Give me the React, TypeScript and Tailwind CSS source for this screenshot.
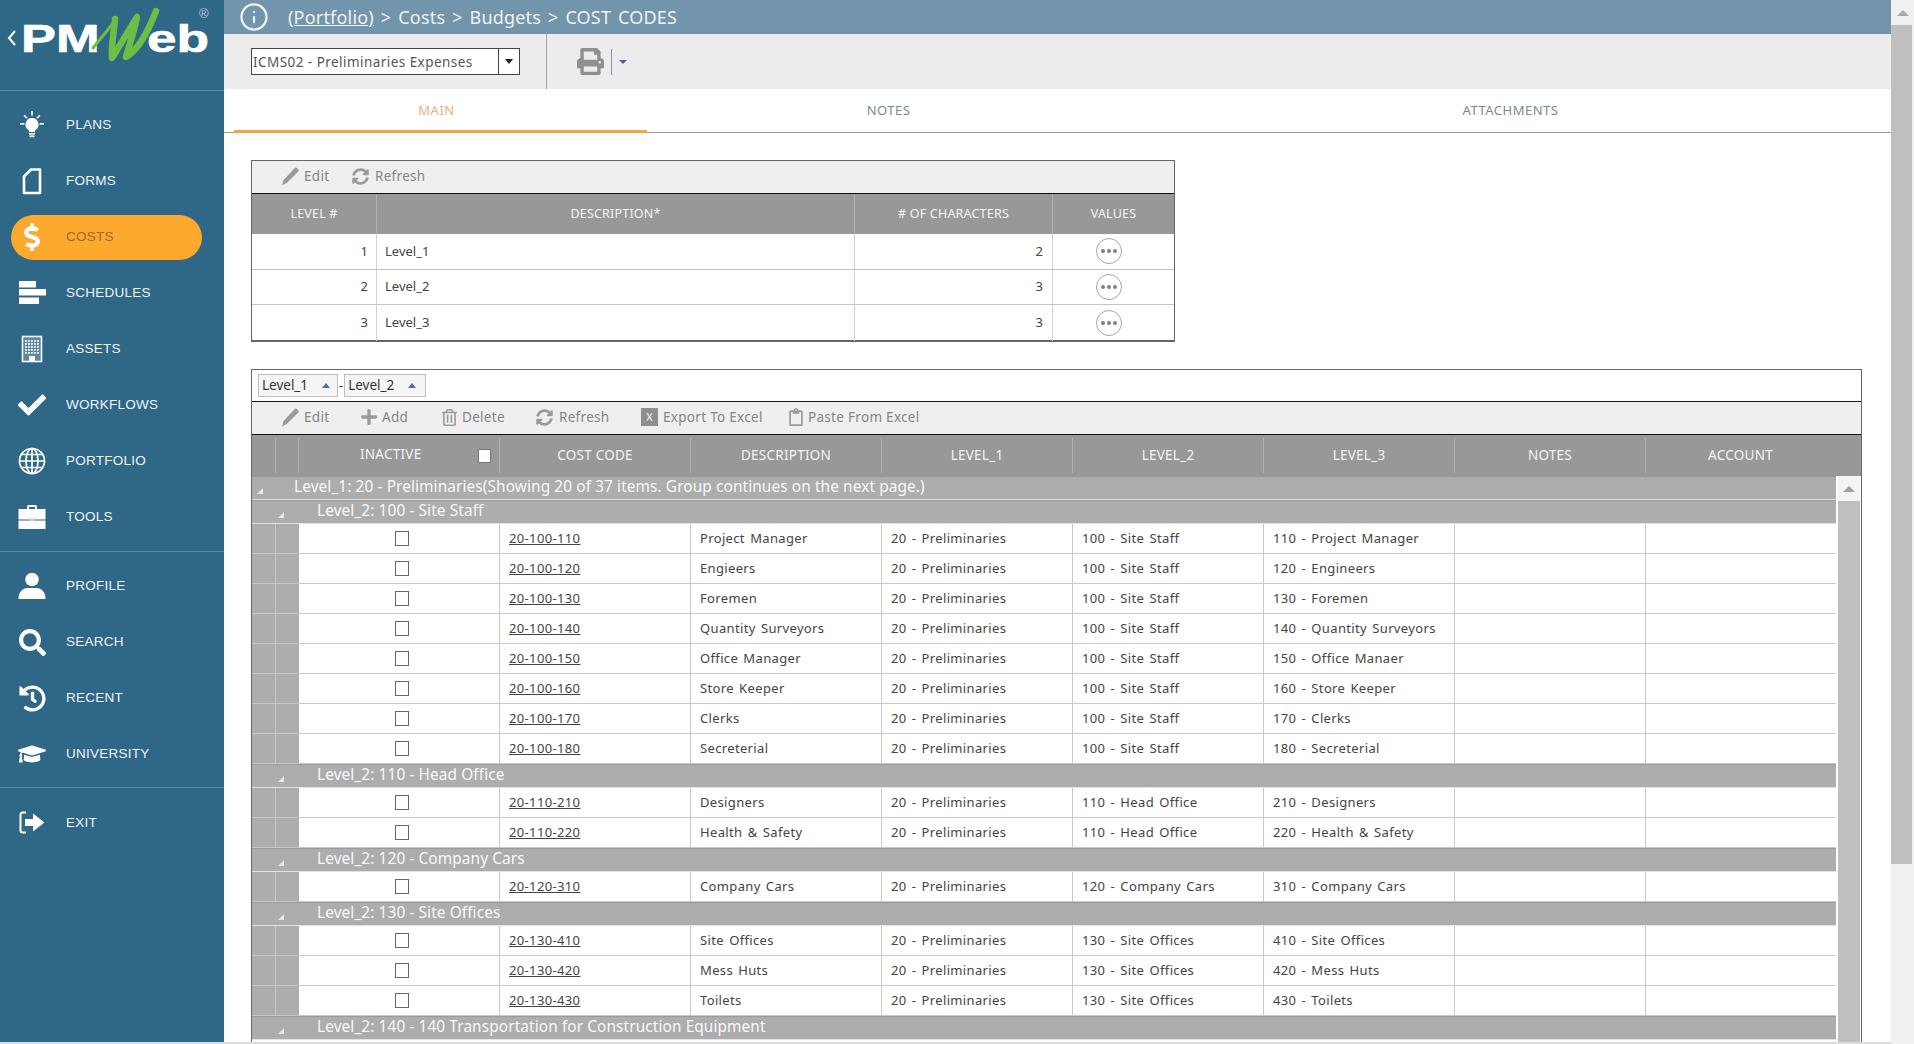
import { ReactNode } from "react";
import { Info } from "lucide-react";
import {
  FaCheck,
  FaDollarSign,
  FaGraduationCap,
  FaHistory,
  FaPlus,
  FaPrint,
  FaRegClipboard,
  FaRegTrashAlt,
  FaSearch,
  FaSyncAlt,
} from "react-icons/fa";

const BODY_FONT = "font-['Noto_Sans',sans-serif]";

function BulbIcon() {
  return (
    <svg width="28" height="28" viewBox="0 0 28 28" fill="white">
      <path d="M14 7a6.5 6.5 0 0 0-4 11.6c.8.7 1 1.4 1 2.4h6c0-1 .2-1.7 1-2.4A6.5 6.5 0 0 0 14 7z" />
      <rect x="11" y="22" width="6" height="1.6" />
      <rect x="11.5" y="24.4" width="5" height="1.8" />
      <rect x="13.2" y="0" width="1.6" height="4.5" />
      <rect x="2" y="12" width="4.5" height="1.6" />
      <rect x="21.5" y="12" width="4.5" height="1.6" />
      <path d="M5.5 4.8l1.2-1.1 3 3-1.2 1.1zM22.5 4.8l-1.2-1.1-3 3 1.2 1.1z" />
    </svg>
  );
}

function PageIcon() {
  return (
    <svg width="28" height="28" viewBox="0 0 28 28" fill="none" stroke="white" strokeWidth="2.6">
      <path d="M6 26V9.5L13 2.5h9V26z" strokeLinejoin="round" />
    </svg>
  );
}

function BarsIcon() {
  return (
    <svg width="28" height="28" viewBox="0 0 28 28" fill="white">
      <rect x="1" y="2" width="17" height="6.5" />
      <rect x="1" y="10" width="27" height="6.5" />
      <rect x="1" y="18.5" width="20" height="6.5" />
    </svg>
  );
}

function BuildingIcon() {
  const dots = [];
  for (let y = 5; y < 20; y += 3) {
    for (let x = 7; x < 22; x += 3) {
      dots.push(<rect key={x + "-" + y} x={x} y={y} width="1.8" height="1.8" fill="white" />);
    }
  }
  return (
    <svg width="28" height="28" viewBox="0 0 28 28">
      <rect x="4.5" y="1.5" width="19" height="25" fill="#5b87a2" stroke="white" strokeWidth="1.6" />
      {dots}
      <rect x="11" y="21" width="6" height="5.5" fill="white" />
    </svg>
  );
}

function GlobeIcon() {
  return (
    <svg width="28" height="28" viewBox="0 0 28 28" fill="none" stroke="white" strokeWidth="1.7">
      <circle cx="14" cy="14" r="12.5" />
      <ellipse cx="14" cy="14" rx="6" ry="12.5" />
      <path d="M14 1.5v25M1.5 14h25M3.5 7.5h21M3.5 20.5h21" />
    </svg>
  );
}

function BriefcaseIcon() {
  return (
    <svg width="28" height="28" viewBox="0 0 28 28" fill="white">
      <path d="M9 6V3.5A1.5 1.5 0 0 1 10.5 2h7A1.5 1.5 0 0 1 19 3.5V6h-2V4h-6v2z" />
      <rect x="0.5" y="6" width="27" height="10.5" />
      <rect x="0.5" y="17.5" width="27" height="8.5" />
      <rect x="12.5" y="15" width="3" height="3.5" fill="#cfdde6" />
    </svg>
  );
}

function UserIcon() {
  return (
    <svg width="28" height="28" viewBox="0 0 28 28" fill="white">
      <circle cx="14" cy="7.5" r="6.8" />
      <path d="M0.5 27c0-7 4-11 9-11h9c5 0 9 4 9 11z" />
    </svg>
  );
}

function ExitIcon() {
  return (
    <svg width="28" height="28" viewBox="0 0 28 28" fill="white">
      <path d="M8 3.5H4.5A2 2 0 0 0 2.5 5.5v16a2 2 0 0 0 2 2H8" fill="none" stroke="white" strokeWidth="2" />
      <path d="M7 10h8V4.5L26.5 13.5 15 22.5V17H7z" />
    </svg>
  );
}

function PencilIcon() {
  return (
    <svg width="19" height="19" viewBox="0 0 19 19" fill="currentColor">
      <path d="M1 18.5l1.6-5.5L13.5 1.2c.8-.8 1.8-.8 2.6 0l1 1c.8.8.8 1.8 0 2.6L6 15.8z" />
    </svg>
  );
}

function Logo() {
  return (
    <div className="relative h-[91px] border-b border-[#5f8ba6] font-['Liberation_Sans',sans-serif] text-white">
      <svg className="absolute left-[7px] top-[29px]" width="10" height="18" viewBox="0 0 10 18" fill="none" stroke="white" strokeWidth="2">
        <path d="M8 2L2 9l6 7" />
      </svg>
      <span className="absolute left-[21px] top-[17px] origin-left scale-x-[1.38] text-[38px] font-bold leading-[44px] [-webkit-text-stroke:0.6px_white]">PM</span>
      <span className="absolute left-[147px] top-[17px] origin-left scale-x-[1.4] text-[38px] font-bold leading-[44px] [-webkit-text-stroke:0.6px_white]">eb</span>
      <svg className="absolute left-[88px] top-[6px]" width="74" height="58" viewBox="0 0 74 58" fill="none" stroke="#6cbf44" strokeLinejoin="round" strokeLinecap="round">
        <path d="M5 42L27 15" strokeWidth="3" />
        <path d="M27 13C26 26 23 40 24 52C32 40 40 25 49 11C46 26 41 40 38 51C50 44 60 26 68 5" strokeWidth="6.5" />
      </svg>
      <span className="absolute left-[199px] top-[6px] text-[13px] leading-4 text-[#b9cbd7]">®</span>
    </div>
  );
}

function NavItem({ icon, label, active }: { icon: ReactNode; label: string; active?: boolean }) {
  return (
    <div className="flex h-[56px] items-center">
      <div
        className={
          "mx-[11px] flex h-[45px] w-[191px] items-center gap-[20px] rounded-full pl-[7px] " +
          (active ? "bg-[#fda92d] text-[#9a6a30]" : "text-[#eef3f6]")
        }
      >
        <span className="flex w-[28px] shrink-0 justify-center text-white">{icon}</span>
        <span className="font-['Liberation_Sans',sans-serif] text-[13.5px] tracking-[0.25px]">{label}</span>
      </div>
    </div>
  );
}

function Sidebar() {
  return (
    <aside className="w-[224px] shrink-0 bg-[#2f6787]">
      <Logo />
      <div className="border-b border-[#5f8ba6] py-[6px]">
        <NavItem icon={<BulbIcon />} label="PLANS" />
        <NavItem icon={<PageIcon />} label="FORMS" />
        <NavItem icon={<FaDollarSign size={28} />} label="COSTS" active />
        <NavItem icon={<BarsIcon />} label="SCHEDULES" />
        <NavItem icon={<BuildingIcon />} label="ASSETS" />
        <NavItem icon={<FaCheck size={28} />} label="WORKFLOWS" />
        <NavItem icon={<GlobeIcon />} label="PORTFOLIO" />
        <NavItem icon={<BriefcaseIcon />} label="TOOLS" />
      </div>
      <div className="border-b border-[#5f8ba6] pb-[5px] pt-[6px]">
        <NavItem icon={<UserIcon />} label="PROFILE" />
        <NavItem icon={<FaSearch size={27} />} label="SEARCH" />
        <NavItem icon={<FaHistory size={27} />} label="RECENT" />
        <NavItem icon={<FaGraduationCap size={28} />} label="UNIVERSITY" />
      </div>
      <div className="pt-[7px]">
        <NavItem icon={<ExitIcon />} label="EXIT" />
      </div>
    </aside>
  );
}

function TopBars() {
  return (
    <>
      <div className="flex h-[34px] shrink-0 items-center bg-[#7395ab] pl-[15px] text-[#edf2f5]">
        <Info size={30} strokeWidth={1.8} />
        <div className={BODY_FONT + " ml-[19px] text-[18px] tracking-[0.2px] [word-spacing:2px]"}>
          <span className="underline">(Portfolio)</span> &gt; Costs &gt; Budgets &gt; COST CODES
        </div>
      </div>
      <div className="flex h-[55px] shrink-0 items-stretch bg-[#ececec]">
        <div className="flex w-[323px] items-center border-r border-[#a5a5a5] pl-[27px]">
          <div className="flex h-[27px] w-[269px] items-center border border-[#444] bg-white">
            <span className={BODY_FONT + " flex-1 pl-[1px] pt-[2px] text-[13.5px] tracking-[0.45px] text-[#555]"}>ICMS02 - Preliminaries Expenses</span>
            <span className="flex h-full w-[21px] items-center justify-center border-l border-[#444]">
              <span className="h-0 w-0 border-x-[4px] border-t-[5px] border-x-transparent border-t-[#222]" />
            </span>
          </div>
        </div>
        <div className="flex items-center pl-[30px]">
          <FaPrint size={27} className="text-[#8f8f8f]" />
          <span className="ml-[7px] h-[26px] w-[1px] bg-[#8d92b4]" />
          <span className="ml-[7px] h-0 w-0 border-x-[4px] border-t-[4px] border-x-transparent border-t-[#4d5f9f]" />
        </div>
      </div>
      <div className={BODY_FONT + " flex h-[44px] shrink-0 border-b border-[#999] pl-[10px] text-[13px] tracking-[0.5px] text-[#7d8893]"}>
        <div className="-mb-px flex w-[413px] items-center justify-center border-b-[3px] border-[#eea93f] pr-[8px] pt-[2px] text-[#f2ad7c]">MAIN</div>
        <div className="flex w-[483px] items-center justify-center">NOTES</div>
        <div className="flex flex-1 items-center justify-center">ATTACHMENTS</div>
      </div>
    </>
  );
}

function ToolItem({ icon, label, className, iconClass }: { icon: ReactNode; label: string; className: string; iconClass?: string }) {
  return (
    <div className={"flex shrink-0 items-center pb-[2px] " + className}>
      <span className={"flex shrink-0 items-center text-[#9a9a9a] " + (iconClass ?? "w-[23px]")}>{icon}</span>
      <span className="text-[13.5px] tracking-[0.3px] text-[#868686]">{label}</span>
    </div>
  );
}

function DotsButton() {
  return (
    <span className="flex h-[26px] w-[26px] items-center justify-center gap-[2px] rounded-full border border-[#a5a5a5] bg-white">
      <span className="h-[4px] w-[4px] rounded-full bg-[#808080]" />
      <span className="h-[4px] w-[4px] rounded-full bg-[#808080]" />
      <span className="h-[4px] w-[4px] rounded-full bg-[#808080]" />
    </span>
  );
}

const levelRows = [
  ["1", "Level_1", "2"],
  ["2", "Level_2", "3"],
  ["3", "Level_3", "3"],
];

const LEVEL_COLS = "grid grid-cols-[125px_478px_198px_121px]";

function LevelsGrid() {
  return (
    <div className="h-[182px] w-[924px] border border-[#666] border-b-2">
      <div className="flex h-[33px] items-center border-b border-[#111] bg-[#efefef] pl-[29px]">
        <ToolItem className="w-[71px]" icon={<PencilIcon />} label="Edit" />
        <ToolItem className="" icon={<FaSyncAlt size={17} />} label="Refresh" />
      </div>
      <div className={LEVEL_COLS + " h-[40px] bg-[#989898] text-[12.5px] tracking-[0.2px] text-[#f5f5f5]"}>
        <div className="flex items-center justify-center border-r border-[#b0b0b0]">LEVEL #</div>
        <div className="flex items-center justify-center border-r border-[#b0b0b0]">DESCRIPTION*</div>
        <div className="flex items-center justify-center border-r border-[#b0b0b0]">
          # OF CHARACTERS
        </div>
        <div className="flex items-center justify-center">VALUES</div>
      </div>
      {levelRows.map((r, i) => (
        <div key={r[0]} className={LEVEL_COLS + " h-[35.5px] text-[13px] text-[#444] " + (i < 2 ? "border-b border-[#c4c4c4]" : "")}>
          <div className="flex items-center justify-end border-r border-[#d0d0d0] pr-[8px]">{r[0]}</div>
          <div className="flex items-center border-r border-[#d0d0d0] pl-[8px]">{r[1]}</div>
          <div className="flex items-center justify-end border-r border-[#d0d0d0] pr-[9px]">{r[2]}</div>
          <div className="flex items-center justify-center pr-[9px]">
            <DotsButton />
          </div>
        </div>
      ))}
    </div>
  );
}

const COLS = "grid grid-cols-[24px_23px_201px_191px_191px_191px_191px_191px_191px_189px]";

function HeadCell({ children }: { children?: ReactNode }) {
  return <div className="my-[3px] flex items-center justify-center border-r border-[#aeaeae]">{children}</div>;
}

function GroupRow({ label, indent }: { label: string; indent?: boolean }) {
  return (
    <div className="flex h-[24px] items-center border-b border-t border-b-[#e3e3e3] border-t-[#9a9a9a] bg-[#adadad] pb-[3px] text-[15.4px] tracking-[0.1px] text-[#f9f9f9]">
      <span className={(indent ? "ml-[26px] mr-[33px] " : "ml-[5px] mr-[31px] ") + "mt-[9px] h-0 w-0 border-b-[6px] border-l-[6px] border-b-[#e8e8e8] border-l-transparent"} />
      <span>{label}</span>
    </div>
  );
}

function DataRow({ row }: { row: string[] }) {
  return (
    <div className={COLS + " h-[30px] border-b border-[#c9c9c9] text-[13px] tracking-[0.35px] text-[#444] [word-spacing:1.5px]"}>
      <div className="border-r border-[#c6c6c6] bg-[#adadad]" />
      <div className="bg-[#adadad]" />
      <div className="flex items-center justify-center border-r border-[#c9c9c9] pl-[5px]">
        <span className="h-[15px] w-[14px] border border-[#666] bg-white" />
      </div>
      <div className="flex items-center border-r border-[#c9c9c9] pl-[9px] pt-[1px] underline">{row[0]}</div>
      {row.slice(1).map((c, i) => (
        <div key={i} className="flex items-center border-r border-[#c9c9c9] pl-[9px] pt-[1px]">
          {c}
        </div>
      ))}
      <div className="border-r border-[#c9c9c9]" />
      <div />
    </div>
  );
}

function row(code: string, desc: string, l2: string, l3: string) {
  return [code, desc, "20 - Preliminaries", l2, l3];
}

const staff = "100 - Site Staff";
const office = "110 - Head Office";
const cars = "120 - Company Cars";
const site = "130 - Site Offices";

const groups: [string, string[][]][] = [
  [
    "Level_2: 100 - Site Staff",
    [
      row("20-100-110", "Project Manager", staff, "110 - Project Manager"),
      row("20-100-120", "Engieers", staff, "120 - Engineers"),
      row("20-100-130", "Foremen", staff, "130 - Foremen"),
      row("20-100-140", "Quantity Surveyors", staff, "140 - Quantity Surveyors"),
      row("20-100-150", "Office Manager", staff, "150 - Office Manaer"),
      row("20-100-160", "Store Keeper", staff, "160 - Store Keeper"),
      row("20-100-170", "Clerks", staff, "170 - Clerks"),
      row("20-100-180", "Secreterial", staff, "180 - Secreterial"),
    ],
  ],
  [
    "Level_2: 110 - Head Office",
    [
      row("20-110-210", "Designers", office, "210 - Designers"),
      row("20-110-220", "Health & Safety", office, "220 - Health & Safety"),
    ],
  ],
  ["Level_2: 120 - Company Cars", [row("20-120-310", "Company Cars", cars, "310 - Company Cars")]],
  [
    "Level_2: 130 - Site Offices",
    [
      row("20-130-410", "Site Offices", site, "410 - Site Offices"),
      row("20-130-420", "Mess Huts", site, "420 - Mess Huts"),
      row("20-130-430", "Toilets", site, "430 - Toilets"),
    ],
  ],
  ["Level_2: 140 - 140 Transportation for Construction Equipment", []],
];

function SortChip({ label, className }: { label: string; className: string }) {
  return (
    <div className={"flex h-[23px] items-center border border-[#bdbdbd] bg-[#f5f5f5] pl-[3px] text-[13.5px] text-[#333] " + className}>
      <span className="w-[60px]">{label}</span>
      <span className="h-0 w-0 border-x-[4px] border-b-[5px] border-x-transparent border-b-[#4f6f9f]" />
    </div>
  );
}

function CodesGrid() {
  return (
    <div className="mt-[27px] min-h-0 w-[1611px] flex-1 overflow-hidden border-l border-r border-t border-[#666]">
      <div className="flex h-[32px] items-center gap-[1px] border-b border-[#111] pl-[6px]">
        <SortChip className="w-[80px]" label="Level_1" />
        <span className="text-[13px] text-[#333]">-</span>
        <SortChip className="w-[82px]" label="Level_2" />
      </div>
      <div className="flex h-[33px] items-center border-b border-[#111] bg-[#efefef] pl-[29px]">
        <ToolItem className="w-[79px]" icon={<PencilIcon />} label="Edit" />
        <ToolItem className="w-[81px]" iconClass="w-[22px]" icon={<FaPlus size={18} />} label="Add" />
        <ToolItem className="w-[95px]" iconClass="w-[21px]" icon={<FaRegTrashAlt size={17} />} label="Delete" />
        <ToolItem className="w-[105px]" icon={<FaSyncAlt size={17} />} label="Refresh" />
        <ToolItem
          className="w-[146px]"
          iconClass="w-[22px]"
          icon={<span className="flex h-[18px] w-[17px] items-center justify-center bg-[#8e8e8e] text-[11px] text-white">X</span>}
          label="Export To Excel"
        />
        <ToolItem className="" iconClass="w-[21px]" icon={<FaRegClipboard size={18} />} label="Paste From Excel" />
      </div>
      <div className={COLS + " h-[41px] bg-[#989898] text-[13.5px] tracking-[0.25px] text-[#f4f4f4]"}>
        <HeadCell />
        <HeadCell />
        <div className="my-[3px] flex items-center border-r border-[#aeaeae]">
          <span className="ml-[61px] -mt-[3px]">INACTIVE</span>
          <span className="ml-[57px] h-[14px] w-[13px] border border-[#777] bg-white" />
        </div>
        <HeadCell>COST CODE</HeadCell>
        <HeadCell>DESCRIPTION</HeadCell>
        <HeadCell>LEVEL_1</HeadCell>
        <HeadCell>LEVEL_2</HeadCell>
        <HeadCell>LEVEL_3</HeadCell>
        <HeadCell>NOTES</HeadCell>
        <div className="my-[3px] flex items-center justify-center">ACCOUNT</div>
      </div>
      <div className="flex h-full">
        <div className="w-[1584px] shrink-0">
          <GroupRow label="Level_1: 20 - Preliminaries(Showing 20 of 37 items. Group continues on the next page.)" />
          {groups.map(([label, rows]) => (
            <div key={label}>
              <GroupRow label={label} indent />
              {rows.map((r) => (
                <DataRow key={r[0]} row={r} />
              ))}
            </div>
          ))}
        </div>
        <div className="ml-[2px] w-[22px] shrink-0">
          <div className="flex h-[25px] items-center justify-center bg-[#f4f4f4]">
            <span className="h-0 w-0 border-x-[6px] border-b-[6px] border-x-transparent border-b-[#a0a0a0]" />
          </div>
          <div className="h-full bg-[#bfbfbf]" />
        </div>
      </div>
    </div>
  );
}

export default function App() {
  return (
    <div className="flex h-[1044px] w-full overflow-hidden bg-white">
      <div className="flex w-[1891px] flex-col">
        <div className="flex h-[1042px]">
          <Sidebar />
          <main className="flex min-w-0 flex-1 flex-col">
            <TopBars />
            <div className={BODY_FONT + " flex min-h-0 flex-1 flex-col pl-[27px] pt-[27px]"}>
              <LevelsGrid />
              <CodesGrid />
            </div>
          </main>
        </div>
        <div className="h-[2px] bg-[#dcdcdc]" />
      </div>
      <div className="flex-1 bg-[#f0f0f0]">
        <div className="flex h-[25px] items-center justify-center">
          <span className="h-0 w-0 border-x-[6px] border-b-[6px] border-x-transparent border-b-[#a8a8a8]" />
        </div>
        <div className="h-[839px] w-[21px] bg-[#bfbfbf]" />
      </div>
    </div>
  );
}
